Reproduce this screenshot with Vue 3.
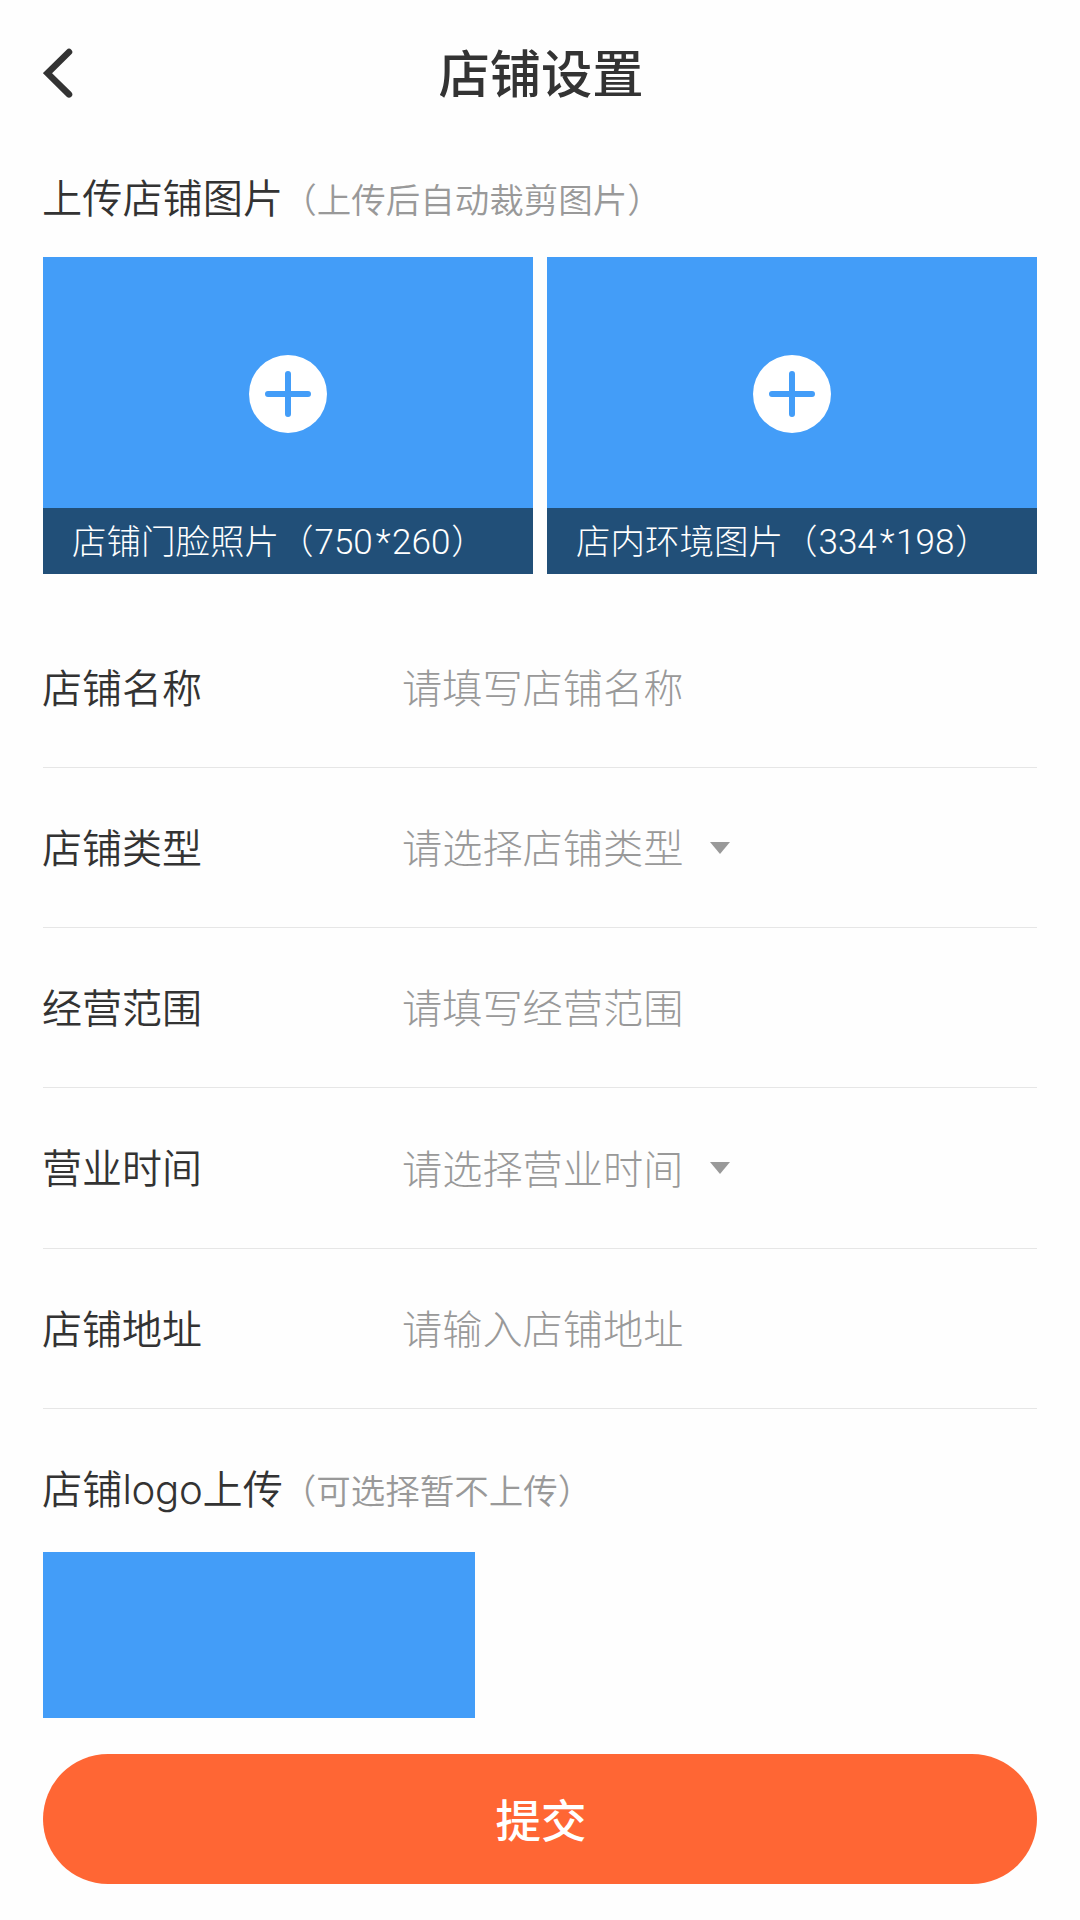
<script setup>
const photos = [
  { name: '店铺门脸照片', width: 750, height: 260 },
  { name: '店内环境图片', width: 334, height: 198 },
]
const fields = [
  { label: '店铺名称', hint: '请填写店铺名称', select: false },
  { label: '店铺类型', hint: '请选择店铺类型', select: true },
  { label: '经营范围', hint: '请填写经营范围', select: false },
  { label: '营业时间', hint: '请选择营业时间', select: true },
  { label: '店铺地址', hint: '请输入店铺地址', select: false },
]
</script>

<template>
  <main class="page">
    <header class="bar">
      <svg class="back" width="30" height="50" viewBox="0 0 30 50">
        <path d="M26 4 4.500 25.200 26 46.400" fill="none" stroke="#333" stroke-width="6.500" stroke-linecap="round" stroke-linejoin="miter" />
      </svg>
      <h1 class="title">店铺设置</h1>
    </header>

    <h2 class="heading">上传店铺图片<small class="note">（上传后自动裁剪图片）</small></h2>
    <div class="photos">
      <div v-for="p in photos" :key="p.name" class="photo">
        <div class="drop">
          <svg width="78" height="78" viewBox="0 0 78 78">
            <circle cx="39" cy="39" r="39" fill="#fff" />
            <path d="M39 19v40M19 39h40" stroke="#439df8" stroke-width="6" stroke-linecap="round" />
          </svg>
        </div>
        <div class="caption">{{ p.name }}（<span class="digits">{{ p.width }}<span class="times">*</span>{{ p.height }}</span>）</div>
      </div>
    </div>

    <section class="fields">
      <div v-for="f in fields" :key="f.label" class="field">
        <span class="label">{{ f.label }}</span>
        <span class="hint">{{ f.hint }}</span>
        <svg v-if="f.select" class="arrow" width="20" height="12" viewBox="0 0 20 12">
          <path d="M0 0h20L10 12z" fill="#999" />
        </svg>
      </div>
    </section>

    <h2 class="heading logo-heading">店铺<span class="latin">logo</span>上传<small class="note">（可选择暂不上传）</small></h2>
    <div class="logo-drop"></div>
    <button class="submit" type="button">提交</button>
  </main>
</template>

<style>
body {
  background: #fefefe;
}
</style>

<style scoped>
.page {
  box-sizing: border-box;
  height: 1920px;
  padding: 0 43px;
  overflow: hidden;
  color: #333;
  background: #fefefe;
  font-family: "Noto Sans CJK SC", sans-serif;
  font-size: 40px;
}
.bar {
  display: grid;
  grid-template-columns: 30px 1fr 30px;
  align-items: center;
  height: 145px;
}
.title {
  margin: 0;
  padding: 0 0 3px 2px;
  font-size: 51.3px;
  font-weight: 500;
  line-height: 60px;
  text-align: center;
}
.heading {
  height: 60px;
  margin: 21px 0 31px -1px;
  font-size: 40.2px;
  font-weight: 350;
  line-height: 60px;
  white-space: nowrap;
}
.note {
  margin-left: -1px;
  color: #999;
  font-size: 34.5px;
  font-weight: 350;
}
.photos {
  display: flex;
  gap: 14px;
}
.photo {
  flex: 1;
  background: #439df8;
}
.drop {
  display: flex;
  align-items: center;
  justify-content: center;
  height: 251px;
}
.drop svg {
  margin-top: 22px;
}
.caption {
  height: 66px;
  padding-left: 29px;
  color: #fff;
  background: #214f78;
  font-size: 34.5px;
  font-weight: 300;
  line-height: 62px;
  white-space: nowrap;
}
.digits {
  margin: 0 1px;
  font-family: Roboto, sans-serif;
  font-size: 35px;
}
.times {
  padding: 0 1.5px 0 3px;
}
.fields {
  margin-top: 34px;
}
.field {
  display: flex;
  align-items: center;
  box-sizing: border-box;
  height: 160px;
  border-bottom: 1px solid #e6e6e6;
}
.field:nth-child(4) {
  height: 161px;
}
.label {
  width: 360px;
  margin-left: -1px;
  padding-bottom: 4px;
  font-weight: 350;
}
.hint {
  padding-bottom: 4px;
  color: #999;
  font-size: 40.2px;
  font-weight: 250;
}
.arrow {
  margin-left: 26.5px;
}
.logo-heading {
  margin: 48px 0 35px -1px;
}
.latin {
  font-family: Inter, sans-serif;
  font-weight: 300;
  letter-spacing: -0.3px;
}
.logo-drop {
  width: 432px;
  height: 166px;
  background: #439df8;
}
.submit {
  display: block;
  width: 100%;
  height: 130px;
  margin-top: 36px;
  padding: 0 0 2px 2px;
  border: 0;
  border-radius: 65px;
  color: #fff;
  background: #ff6634;
  font-family: inherit;
  font-size: 45.5px;
  font-weight: 500;
}
</style>
